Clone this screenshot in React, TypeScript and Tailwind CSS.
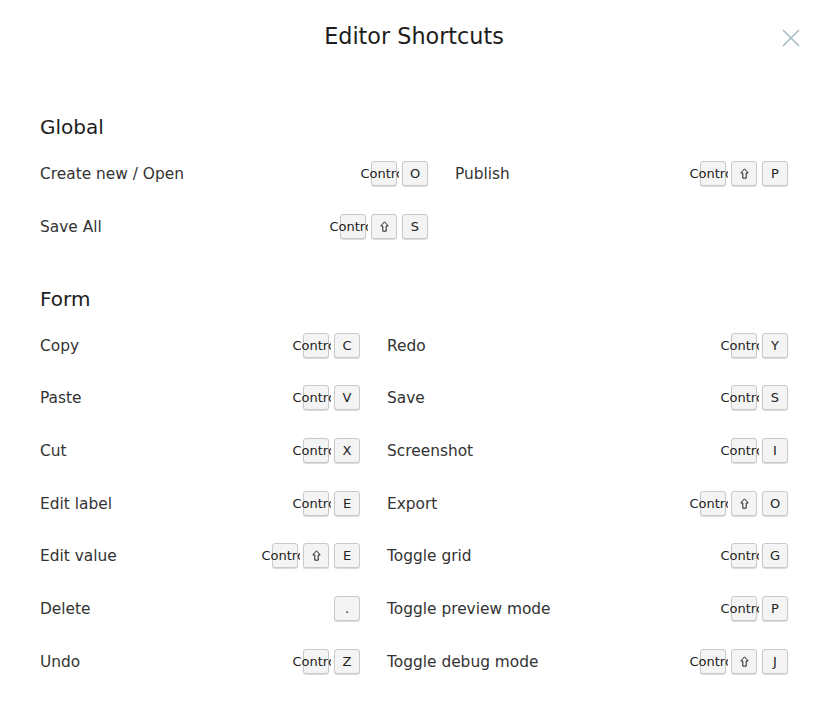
import { Fragment } from 'react';

interface Shortcut {
  label: string;
  keys: string[];
}

interface Section {
  title: string;
  cols: string;
  rows: (Shortcut | null)[][];
}

const sections: Section[] = [
  {
    title: 'Global',
    cols: 'grid-cols-[388px_333px]',
    rows: [
      [
        { label: 'Create new / Open', keys: ['Control', 'O'] },
        { label: 'Publish', keys: ['Control', 'shift', 'P'] },
      ],
      [{ label: 'Save All', keys: ['Control', 'shift', 'S'] }, null],
    ],
  },
  {
    title: 'Form',
    cols: 'grid-cols-[320px_401px]',
    rows: [
      [
        { label: 'Copy', keys: ['Control', 'C'] },
        { label: 'Redo', keys: ['Control', 'Y'] },
      ],
      [
        { label: 'Paste', keys: ['Control', 'V'] },
        { label: 'Save', keys: ['Control', 'S'] },
      ],
      [
        { label: 'Cut', keys: ['Control', 'X'] },
        { label: 'Screenshot', keys: ['Control', 'I'] },
      ],
      [
        { label: 'Edit label', keys: ['Control', 'E'] },
        { label: 'Export', keys: ['Control', 'shift', 'O'] },
      ],
      [
        { label: 'Edit value', keys: ['Control', 'shift', 'E'] },
        { label: 'Toggle grid', keys: ['Control', 'G'] },
      ],
      [
        { label: 'Delete', keys: ['.'] },
        { label: 'Toggle preview mode', keys: ['Control', 'P'] },
      ],
      [
        { label: 'Undo', keys: ['Control', 'Z'] },
        { label: 'Toggle debug mode', keys: ['Control', 'shift', 'J'] },
      ],
    ],
  },
];

const ShiftIcon = () => (
  <svg width="9" height="11" viewBox="0 0 9 11" fill="none" stroke="#222" strokeWidth="1" strokeLinejoin="round">
    <path d="M4.5 0.8 L8.2 5 L6.2 5 L6.2 10.2 L2.8 10.2 L2.8 5 L0.8 5 Z" />
  </svg>
);

const Key = ({ value }: { value: string }) => (
  <kbd className="relative flex h-[25px] w-[26px] items-center justify-center rounded-[3px] border border-[#c9c9c9] bg-[#f4f4f4] font-['DejaVu_Sans',sans-serif] text-[13px] text-[#222] shadow-[0_1px_1px_rgba(0,0,0,0.15)] [clip-path:inset(-10px_-2px_-10px_-40px)]">
    {value === 'shift' ? <ShiftIcon /> : <span className="whitespace-nowrap">{value}</span>}
  </kbd>
);

const Row = ({ item, tall }: { item: Shortcut | null; tall: boolean }) => {
  if (!item) return <div className={tall ? 'h-[52.67px]' : 'h-[53px]'} />;
  return (
    <div className={`flex items-center justify-between ${tall ? 'h-[52.67px]' : 'h-[53px]'}`}>
      <span className="mt-[2px] text-[15.4px] text-[#333]">{item.label}</span>
      <div className="flex gap-[5px]">
        {item.keys.map((k, i) => (
          <Key key={i} value={k} />
        ))}
      </div>
    </div>
  );
};

export default function App() {
  return (
    <div className="h-[719px] w-[820px] bg-white font-['DejaVu_Sans',sans-serif] text-[#222]">
      <div className="relative flex h-[72px] items-center justify-center">
        <h1 className="ml-[8px] mt-[2px] text-[22.3px] text-[#1d1d1d]">Editor Shortcuts</h1>
        <button className="absolute right-[19px] top-[28px] text-[#a8bcc6]">
          <svg width="20" height="20" viewBox="0 0 20 20" fill="none" stroke="currentColor" strokeWidth="1.6">
            <path d="M2 2 L18 18 M18 2 L2 18" />
          </svg>
        </button>
      </div>
      <div className="mt-[35px] flex flex-col gap-[26px] px-[40px]">
        {sections.map((section) => (
          <section key={section.title}>
            <h2 className="flex h-[40px] items-center text-[20px] text-[#1d1d1d]">{section.title}</h2>
            <div className={`grid gap-x-[27px] ${section.cols}`}>
              {section.rows.map((row, ri) => (
                <Fragment key={ri}>
                  {row.map((item, ci) => (
                    <Row key={ci} item={item} tall={section.title === 'Form'} />
                  ))}
                </Fragment>
              ))}
            </div>
          </section>
        ))}
      </div>
    </div>
  );
}
